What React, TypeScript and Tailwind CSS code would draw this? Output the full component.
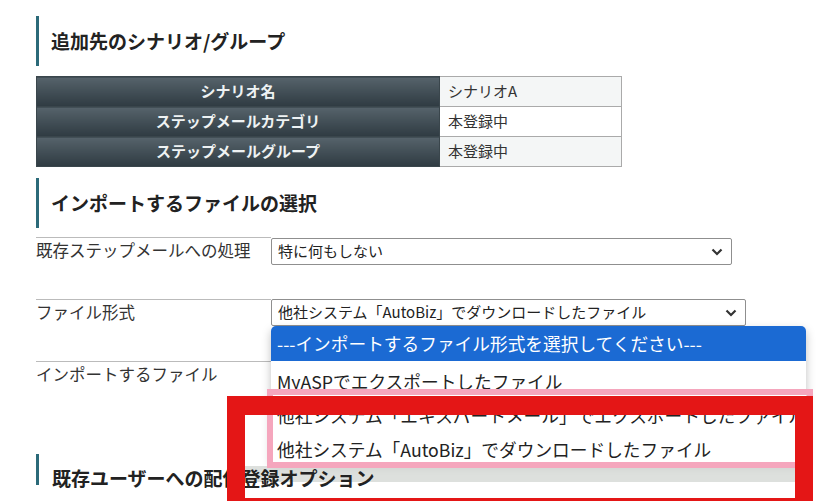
const infoRows = [
  { label: "シナリオ名", value: "シナリオA", shade: true },
  { label: "ステップメールカテゴリ", value: "本登録中", shade: false },
  { label: "ステップメールグループ", value: "本登録中", shade: true },
];

const options = [
  "---インポートするファイル形式を選択してください---",
  "MyASPでエクスポートしたファイル",
  "他社システム「エキスパートメール」でエクスポートしたファイル",
  "他社システム「AutoBiz」でダウンロードしたファイル",
];

function Chevron() {
  return (
    <svg width="12" height="8" viewBox="0 0 12 8" className="shrink-0">
      <polyline points="1.5,1.5 6,6 10.5,1.5" fill="none" stroke="#333" strokeWidth="2.2" />
    </svg>
  );
}

function Heading({ children }: { children: React.ReactNode }) {
  return (
    <h2 className="flex h-[50px] items-center border-l-[3px] border-[#2b6a79] pl-[12px] text-[19px] font-bold text-[#222]">
      {children}
    </h2>
  );
}

function FakeSelect({ text, width }: { text: string; width: string }) {
  return (
    <div
      className={`flex h-[27px] items-center justify-between rounded-[2px] border border-[#8f8f8f] bg-white pl-[6px] pr-[8px] text-[15px] text-[#222] ${width}`}
    >
      <span>{text}</span>
      <Chevron />
    </div>
  );
}

export default function App() {
  return (
    <div className="relative h-[501px] w-[829px] overflow-hidden bg-white font-['Noto_Sans_CJK_JP',sans-serif]">
      <div className="pl-[36px] pt-[16px]">
        <Heading>追加先のシナリオ/グループ</Heading>

        <table className="mt-[10px] w-[586px] border-collapse text-[15px]">
          <tbody>
            {infoRows.map((r) => (
              <tr key={r.label} className="h-[30px]">
                <th className="w-[403px] border border-[#3a464c] bg-linear-to-b from-[#56636b] to-[#2f3b42] text-center font-bold text-[#eef2f3]">
                  {r.label}
                </th>
                <td
                  className={`border border-[#aaaaaa] pl-[8px] text-[#333] ${r.shade ? "bg-[#f4f6f6]" : "bg-white"}`}
                >
                  {r.value}
                </td>
              </tr>
            ))}
          </tbody>
        </table>

        <div className="mt-[11px]">
          <Heading>インポートするファイルの選択</Heading>
        </div>

        <div className="mt-[9px] text-[16.5px] text-[#333]">
          <div className="flex h-[62px]">
            <div className="w-[235px] border-t border-[#bbbbbb] leading-[24px]">既存ステップメールへの処理</div>
            <div className="pt-[1px]">
              <FakeSelect text="特に何もしない" width="w-[461px]" />
            </div>
          </div>
          <div className="flex h-[62px]">
            <div className="w-[235px] border-t border-[#bbbbbb] leading-[24px]">ファイル形式</div>
            <FakeSelect text="他社システム「AutoBiz」でダウンロードしたファイル" width="w-[475px]" />
          </div>
          <div className="flex h-[93px]">
            <div className="w-[235px] border-t border-[#bbbbbb] leading-[24px]">インポートするファイル</div>
          </div>
        </div>

        <h2 className="relative z-10 h-[31px] border-l-[3px] border-[#2b6a79] pl-[13px] pt-[14px] text-[19px] font-bold leading-[19px] text-[#222]">
          既存ユーザーへの配信登録オプション
        </h2>
      </div>

      {/* open select list */}
      <div className="absolute left-[271px] top-[326px] w-[535px] overflow-hidden rounded-[5px] bg-white text-[17.7px] text-[#222] shadow-[0_4px_10px_rgba(0,0,0,0.25)]">
        {options.map((o, i) => (
          <div
            key={o}
            className={
              i === 0
                ? "flex h-[35px] items-center overflow-hidden whitespace-nowrap bg-[#1b6ad3] pl-[6px] text-white"
                : "flex h-[34px] items-center overflow-hidden whitespace-nowrap pl-[6px] pt-[6px]"
            }
          >
            {o}
          </div>
        ))}
      </div>

      {/* annotation frames */}
      <div className="absolute left-[245px] top-[466px] h-[16px] w-[550px] bg-[#cfd3cf]/70" />
      <div className="absolute left-[267px] top-[389px] h-[79px] w-[546px] border-[6px] border-[#f5a6bd]" />
      <div className="absolute left-[227px] top-[396px] z-20 h-[120px] w-[586px] border-x-[18px] border-t-[19px] border-b-[18px] border-[#e41616]" />
    </div>
  );
}
